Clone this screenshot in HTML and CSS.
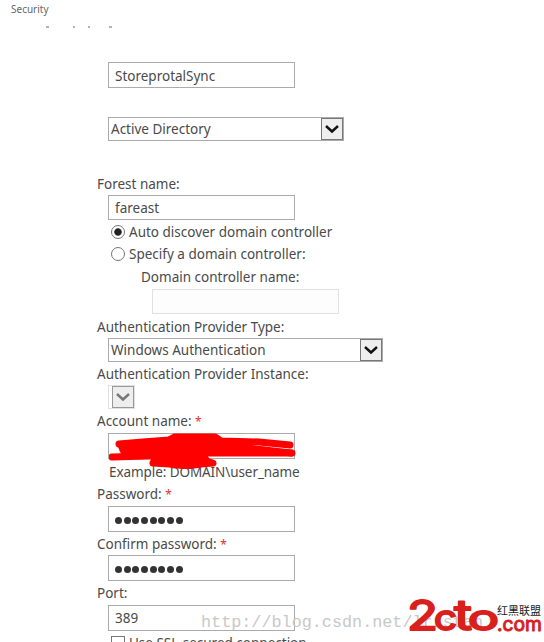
FILE: index.html
```html
<!DOCTYPE html>
<html lang="en">
<head>
  <meta charset="UTF-8" />
  <meta name="viewport" content="width=device-width, initial-scale=1.0" />
  <title>Security</title>
  <link rel="stylesheet" href="styles.css">
</head>
<body>
  <header class="page-header">
    <p class="crumb">Security</p>
    <!-- bottom edge of the clipped title -->
    <svg class="title-edge" width="70" height="2" viewBox="0 0 70 2">
      <path d="M1 1h3M28 1h2M43 1h2M64 1h3" stroke="#666" />
    </svg>
  </header>

  <form class="sync-form">
    <div class="field field-name">
      <div class="box"><span>StoreprotalSync</span></div>
    </div>

    <div class="field field-type">
      <div class="select select-type">
        <span>Active Directory</span>
        <span class="arrow"><svg width="16" height="10" viewBox="0 0 16 10"><path d="M2 2l6 5.5L14 2" /></svg></span>
      </div>
    </div>

    <div class="field field-forest">
      <label class="label"><span>Forest name:</span></label>
      <div class="box"><span>fareast</span></div>
      <div class="option"><span class="radio checked"></span><span>Auto discover domain controller</span></div>
      <div class="option"><span class="radio"></span><span>Specify a domain controller:</span></div>
      <label class="label sub-label"><span>Domain controller name:</span></label>
      <div class="box disabled"></div>
    </div>

    <div class="field field-auth">
      <label class="label"><span>Authentication Provider Type:</span></label>
      <div class="select select-auth">
        <span>Windows Authentication</span>
        <span class="arrow"><svg width="16" height="10" viewBox="0 0 16 10"><path d="M2 2l6 5.5L14 2" /></svg></span>
      </div>
    </div>

    <div class="field field-instance">
      <label class="label"><span>Authentication Provider Instance:</span></label>
      <div class="select select-instance">
        <span class="arrow"><svg width="16" height="10" viewBox="0 0 16 10"><path d="M2 2l6 5.5L14 2" /></svg></span>
      </div>
    </div>

    <div class="field field-account">
      <label class="label"><span>Account name: <b class="req">*</b></span></label>
      <div class="box account-box">
        <svg class="scribble" width="190" height="36" viewBox="0 0 190 36">
          <path d="M10 11L34 9 60 7 66 4H106L112 8 150 9 181 12" />
          <path d="M12 12L14 17 60 15 130 14 182 20" />
          <path d="M3 24L40 23 90 20 183 20" />
          <path d="M44 30L60 31 78 33 92 31 104 30 90 26 50 26" />
          <path class="fill" d="M10 10L66 6H110L135 10 142 20 98 22 104 31 44 30 40 24 12 22Z" />
        </svg>
      </div>
      <p class="hint"><span>Example: DOMAIN\user_name</span></p>
    </div>

    <div class="field field-password">
      <label class="label"><span>Password: <b class="req">*</b></span></label>
      <div class="box"><span class="dots"><i></i><i></i><i></i><i></i><i></i><i></i><i></i><i></i></span></div>
    </div>

    <div class="field field-confirm">
      <label class="label"><span>Confirm password: <b class="req">*</b></span></label>
      <div class="box"><span class="dots"><i></i><i></i><i></i><i></i><i></i><i></i><i></i><i></i></span></div>
    </div>

    <div class="field field-port">
      <label class="label"><span>Port:</span></label>
      <div class="box"><span>389</span></div>
      <div class="option ssl"><span class="checkbox"></span><span>Use SSL-secured connection</span></div>
    </div>
  </form>

  <div class="watermark">http://blog.csdn.net/lrrstan_</div>

  <svg class="logo" width="144" height="46" viewBox="0 0 144 46">
    <g class="logo-red">
      <text x="7" y="34" font-size="41" textLength="31" lengthAdjust="spacingAndGlyphs">2</text>
      <text x="34" y="34" font-size="35" textLength="23" lengthAdjust="spacingAndGlyphs">c</text>
      <text x="54" y="34" font-size="42" textLength="18" lengthAdjust="spacingAndGlyphs">t</text>
      <text x="68" y="34" font-size="35" textLength="31" lengthAdjust="spacingAndGlyphs">o</text>
      <text class="logo-com" x="97" y="35" textLength="45" lengthAdjust="spacingAndGlyphs">.com</text>
    </g>
    <text class="logo-cn" x="97" y="19" textLength="44">红黑联盟</text>
  </svg>
</body>
</html>
```
FILE: styles.css
```css
* {
  box-sizing: border-box;
}

body {
  margin: 0;
  width: 544px;
  height: 642px;
  overflow: hidden;
  position: relative;
  background: #fff;
  color: #4a4a4a;
  font-family: 'Noto Sans', 'Open Sans', sans-serif;
  font-size: 13.5px;
}

p {
  margin: 0;
}

.page-header {
  height: 62px;
  padding: 1px 0 0 11px;
}
.crumb {
  font-size: 10px;
  line-height: 16px;
  color: #666;
}
.title-edge {
  display: block;
  margin: 9px 0 0 34px;
}

.sync-form {
  padding-left: 97px;
}
.sync-form span {
  white-space: nowrap;
}
.field-name {
  height: 55px;
}
.field-name .box {
  padding-top: 1px;
}
.field-type {
  height: 56px;
}
.field-forest {
  height: 144px;
}
.field-auth {
  height: 47px;
}
.field-instance {
  height: 47px;
}
.field-account {
  height: 73px;
}
.field-password {
  height: 49px;
}
.field-confirm {
  height: 50px;
}

.label {
  display: flex;
  align-items: center;
  height: 21px;
}
.field-auth .label,
.field-instance .label {
  height: 20px;
  margin-bottom: 1px;
}
.field-account .label,
.field-password .label,
.field-port .label {
  height: 20px;
  margin-bottom: 2px;
}
.field-confirm .label {
  height: 22px;
}
.sub-label {
  margin-left: 44px;
  height: 24px;
}
.req {
  color: #e03030;
  font-weight: normal;
  font-size: 12px;
}

.box {
  display: flex;
  align-items: center;
  position: relative;
  width: 187px;
  height: 26px;
  margin-left: 11px;
  padding-left: 6px;
  border: 1px solid #ababab;
}
.field-forest .box {
  margin-top: 1px;
  height: 25px;
}
.field-forest .box.disabled {
  margin-top: 0;
  margin-left: 55px;
  border-color: #e1e1e1;
  background: #fdfdfd;
}

.select {
  display: flex;
  align-items: center;
  justify-content: space-between;
  height: 24px;
  margin-left: 11px;
  padding-left: 2px;
  border: 1px solid #ababab;
}
.select-type {
  width: 236px;
}
.select-auth {
  width: 275px;
}
.select-instance {
  width: 27px;
  border-color: #e1e1e1;
  justify-content: flex-end;
}
.arrow {
  display: flex;
  align-items: center;
  justify-content: center;
  flex-shrink: 0;
  width: 22px;
  height: 22px;
  border: 1px solid #777;
  background: #eee;
}
.arrow path {
  fill: none;
  stroke: #111;
  stroke-width: 2.4;
}
.select-instance .arrow {
  border-color: #999;
}
.select-instance path {
  stroke: #777;
}

.option {
  display: flex;
  align-items: center;
  height: 22px;
  margin-left: 14px;
  gap: 4px;
}
.box + .option {
  margin-top: 1px;
}
.radio {
  width: 14px;
  height: 14px;
  border: 1px solid #777;
  border-radius: 50%;
}
.radio.checked {
  background: radial-gradient(circle, #222 3.3px, #fff 4.1px);
}
.checkbox {
  width: 14px;
  height: 14px;
  border: 1px solid #777;
}

.scribble {
  position: absolute;
  left: 0;
  top: -1px;
  fill: none;
  stroke: #f00;
  stroke-width: 7;
  stroke-linecap: round;
  stroke-linejoin: round;
}
.scribble .fill {
  fill: #f00;
  stroke: none;
}
.hint {
  display: flex;
  align-items: center;
  height: 26px;
  margin-left: 12px;
}
.hint span {
  letter-spacing: -0.08px;
}

.dots {
  display: flex;
  gap: 1.7px;
  margin-top: 3px;
}
.dots i {
  width: 7px;
  height: 7px;
  border-radius: 50%;
  background: #333;
}

.watermark {
  position: absolute;
  left: 201px;
  top: 613px;
  font-family: 'Liberation Mono', monospace;
  font-size: 16.8px;
  line-height: 20px;
  color: #c8c8c8;
}

.logo {
  position: absolute;
  left: 400px;
  top: 596px;
}
.logo-red {
  fill: #d9201c;
  stroke: #d9201c;
  stroke-width: 1.9;
  stroke-linejoin: round;
  font-family: 'Inter', sans-serif;
}
.logo-com {
  font-size: 20px;
  stroke-width: 1;
}
.logo-cn {
  font-family: 'Noto Sans CJK SC', sans-serif;
  font-size: 11px;
  fill: #222;
}
```
